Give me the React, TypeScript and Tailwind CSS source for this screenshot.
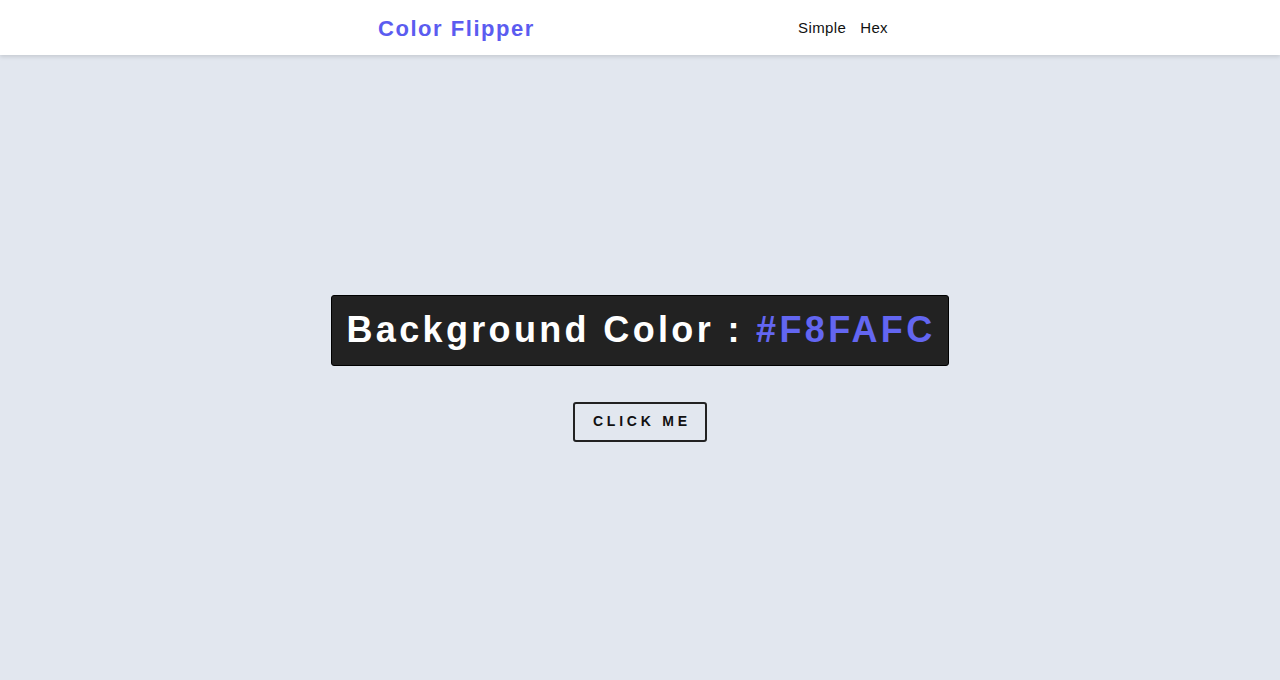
import { useState } from "react";

const App = () => {
  const [color] = useState("#F8FAFC");

  return (
    <div className="min-h-screen flex flex-col bg-[#e2e7ef] font-['Liberation_Sans',Arial,sans-serif]">
      <nav className="h-[55px] bg-white shadow-[0_2px_4px_rgba(0,0,0,0.12)] relative z-10">
        <div className="mx-auto w-[524px] h-full flex items-center justify-between pr-[14px] pt-[1px]">
          <h4 className="text-[22px] font-bold tracking-[0.07em] text-[#5b5cf0]">
            Color Flipper
          </h4>
          <ul className="flex items-center gap-[14px] text-[15px] tracking-[0.025em] text-[#111]">
            <li>Simple</li>
            <li>Hex</li>
          </ul>
        </div>
      </nav>
      <main className="flex-1 flex flex-col items-center justify-center pt-[1px]">
        <h2 className="bg-[#222] border border-black rounded-[3px] h-[71px] pl-[14px] pr-[12px] flex items-center text-[36px] font-bold tracking-[0.093em] text-white whitespace-pre">
          Background Color : <span className="text-[#6366f1]">{color}</span>
        </h2>
        <button className="mt-[36px] w-[134px] h-[40px] border-2 border-[#222] rounded-[3px] text-[14px] font-bold tracking-[0.27em] pl-[0.27em] text-[#111] bg-transparent">
          CLICK ME
        </button>
      </main>
    </div>
  );
};

export default App;
